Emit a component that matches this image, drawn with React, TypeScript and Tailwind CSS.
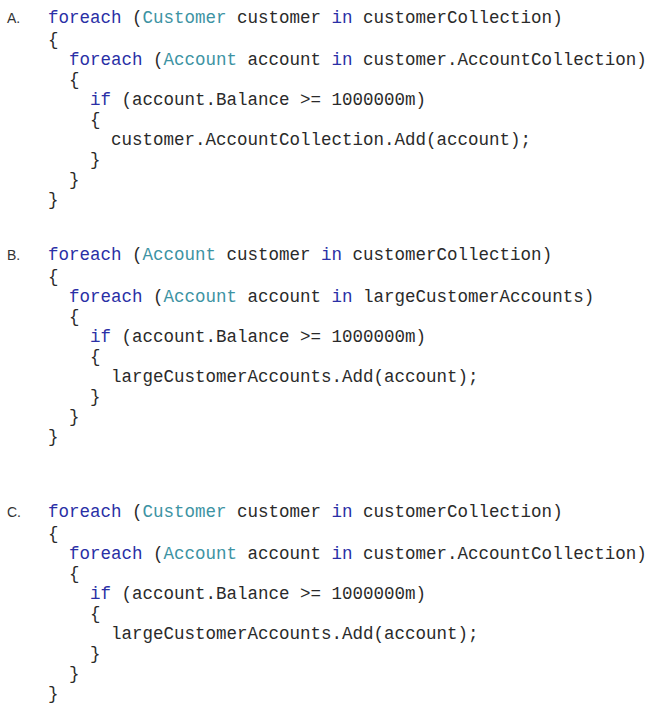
import React from 'react';

type Tok = [string, 'k' | 't' | 'p'];

const kw = (s: string): Tok => [s, 'k'];
const ty = (s: string): Tok => [s, 't'];
const pl = (s: string): Tok => [s, 'p'];

const Line = ({ indent, toks, first }: { indent: number; toks: Tok[]; first?: boolean }) => (
  <div className={first ? 'h-[20px] mb-[2px] whitespace-pre' : 'h-[20px] whitespace-pre'}>
    {' '.repeat(indent)}
    {toks.map(([s, c], i) => (
      <span
        key={i}
        className={c === 'k' ? 'text-[#2a2fa6]' : c === 't' ? 'text-[#3d93a3]' : 'text-[#2a2a2a]'}
      >
        {s}
      </span>
    ))}
  </div>
);

const Option = ({
  label,
  outerType,
  innerSource,
  target,
}: {
  label: string;
  outerType: string;
  innerSource: string;
  target: string;
}) => (
  <div className="flex">
    <div className="w-[48px] pl-[7px] text-[14px] leading-[20px] text-[#333] font-['Liberation_Sans',Arial,sans-serif]">
      {label}
    </div>
    <div className="font-['Liberation_Mono','Courier_New',monospace] text-[17.5px] leading-[20px]">
      <Line
        first
        indent={0}
        toks={[kw('foreach'), pl(' ('), ty(outerType), pl(' customer '), kw('in'), pl(' customerCollection)')]}
      />
      <Line indent={0} toks={[pl('{')]} />
      <Line
        indent={2}
        toks={[kw('foreach'), pl(' ('), ty('Account'), pl(' account '), kw('in'), pl(' ' + innerSource + ')')]}
      />
      <Line indent={2} toks={[pl('{')]} />
      <Line indent={4} toks={[kw('if'), pl(' (account.Balance >= 1000000m)')]} />
      <Line indent={4} toks={[pl('{')]} />
      <Line indent={6} toks={[pl(target + '.Add(account);')]} />
      <Line indent={4} toks={[pl('}')]} />
      <Line indent={2} toks={[pl('}')]} />
      <Line indent={0} toks={[pl('}')]} />
    </div>
  </div>
);

export default function App() {
  return (
    <div className="w-[669px] h-[713px] bg-white pt-[8px]">
      <Option
        label="A."
        outerType="Customer"
        innerSource="customer.AccountCollection"
        target="customer.AccountCollection"
      />
      <div className="h-[35px]" />
      <Option
        label="B."
        outerType="Account"
        innerSource="largeCustomerAccounts"
        target="largeCustomerAccounts"
      />
      <div className="h-[55px]" />
      <Option
        label="C."
        outerType="Customer"
        innerSource="customer.AccountCollection"
        target="largeCustomerAccounts"
      />
    </div>
  );
}
